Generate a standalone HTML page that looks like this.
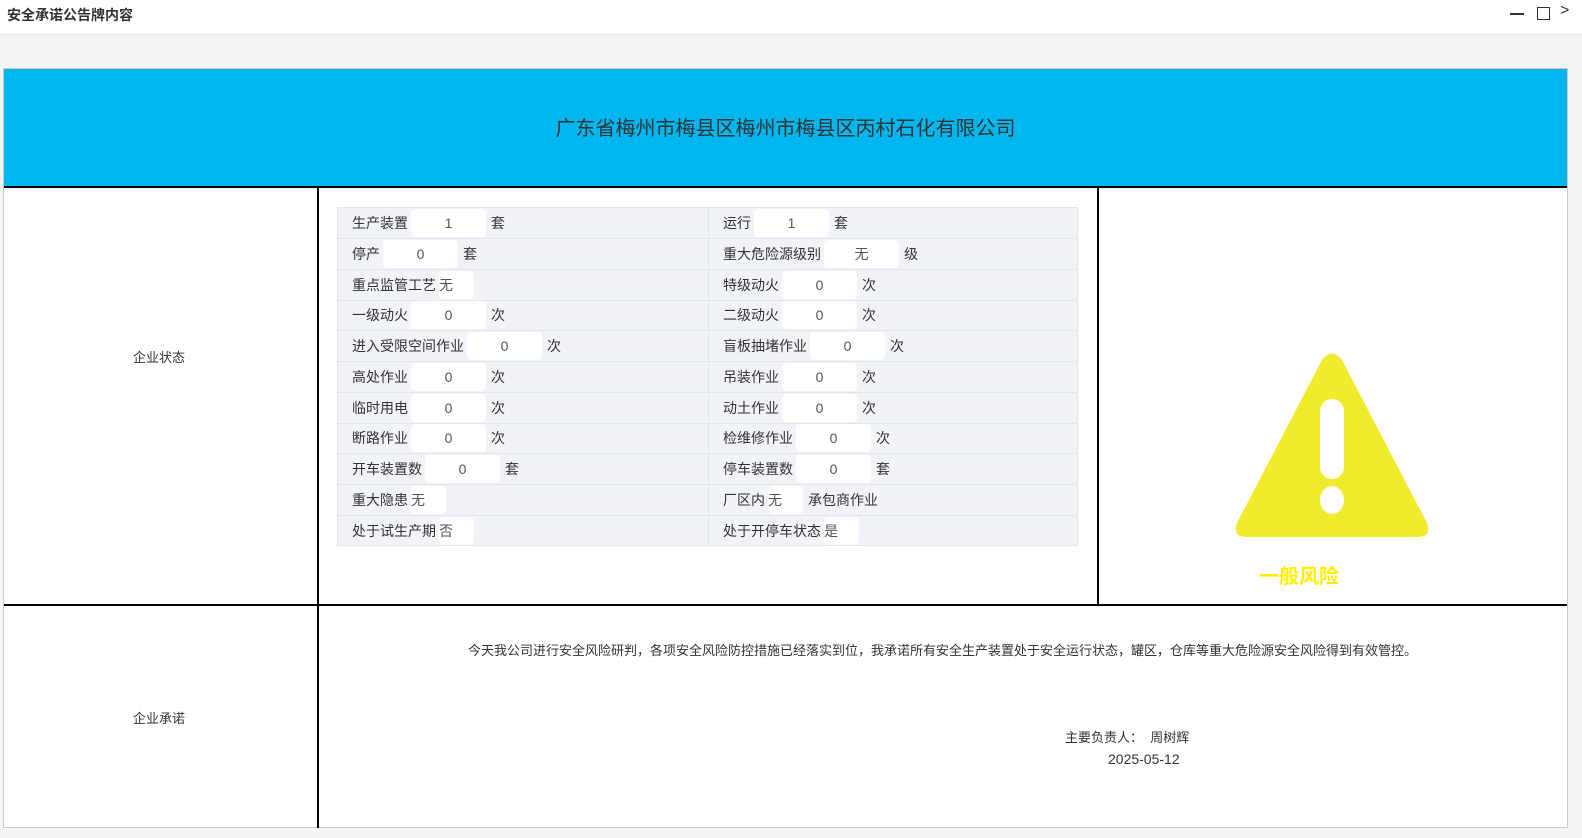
<!DOCTYPE html>
<html><head><meta charset="utf-8"><style>
*{margin:0;padding:0;box-sizing:border-box}
body{width:1582px;height:838px;background:#f4f5f7;font-family:"Liberation Sans","Noto Sans CJK SC",sans-serif;color:#333;position:relative;overflow:hidden}
.top{position:absolute;left:0;top:0;width:1582px;height:35px;background:#fff;border-bottom:1px solid #e8e8e8}
.top .t{position:absolute;left:7px;top:5px;font-size:14px;font-weight:bold;color:#333}
.card{position:absolute;left:3px;top:68px;width:1565px;height:760px;background:#fff;border:1px solid #c8c8c8}
.hd{position:absolute;left:0;top:0;width:1563px;height:117px;background:#00b6ee;text-align:center;line-height:120px;font-size:20px;color:#333}
.hl{position:absolute;background:#000}
.lab{position:absolute;font-size:13px;color:#333}
.tbl{position:absolute;left:333px;top:138px;width:741px;height:339px;background:#f1f3f8;border:1px solid #e3e6ee}
.row{position:absolute;left:0;width:739px;height:31px;border-bottom:1px solid #e3e6ee}
.c{position:absolute;top:0;height:30px;display:flex;align-items:center;font-size:14px;color:#333;white-space:nowrap}
.c1{left:14px}.c2{left:385px}
.sep{position:absolute;left:370px;top:0;width:1px;height:337px;background:#e3e6ee}
.in{display:inline-block;width:75px;height:28px;background:#fff;border-radius:4px;text-align:center;line-height:28px;margin:0 5px 0 3px;color:#555}
.sm{width:35px;text-align:left;margin-left:3px}
</style></head><body>
<div class="top"><div class="t">安全承诺公告牌内容</div>
<div style="position:absolute;left:1510px;top:13px;width:14px;height:2px;background:#333"></div>
<div style="position:absolute;left:1537px;top:7px;width:13px;height:13px;border:1px solid #333"></div>
<div style="position:absolute;left:1560px;top:2px;font-size:16px;color:#333">&gt;</div>
</div>
<div class="card">
<div class="hd">广东省梅州市梅县区梅州市梅县区丙村石化有限公司</div>
<div class="hl" style="left:0;top:117px;width:1563px;height:2px"></div>
<div class="hl" style="left:0;top:535px;width:1563px;height:2px"></div>
<div class="hl" style="left:313px;top:117px;width:2px;height:642px"></div>
<div class="hl" style="left:1093px;top:117px;width:2px;height:418px"></div>
<div class="lab" style="left:129px;top:278px">企业状态</div>
<div class="lab" style="left:129px;top:639px">企业承诺</div>
<div class="tbl">
<div class="sep"></div>
<div class="row" style="top:0"><div class="c c1">生产装置<span class="in">1</span>套</div><div class="c c2">运行<span class="in">1</span>套</div></div>
<div class="row" style="top:31px"><div class="c c1">停产<span class="in">0</span>套</div><div class="c c2">重大危险源级别<span class="in">无</span>级</div></div>
<div class="row" style="top:62px"><div class="c c1">重点监管工艺<span class="in sm">无</span></div><div class="c c2">特级动火<span class="in">0</span>次</div></div>
<div class="row" style="top:92px"><div class="c c1">一级动火<span class="in">0</span>次</div><div class="c c2">二级动火<span class="in">0</span>次</div></div>
<div class="row" style="top:123px"><div class="c c1">进入受限空间作业<span class="in">0</span>次</div><div class="c c2">盲板抽堵作业<span class="in">0</span>次</div></div>
<div class="row" style="top:154px"><div class="c c1">高处作业<span class="in">0</span>次</div><div class="c c2">吊装作业<span class="in">0</span>次</div></div>
<div class="row" style="top:185px"><div class="c c1">临时用电<span class="in">0</span>次</div><div class="c c2">动土作业<span class="in">0</span>次</div></div>
<div class="row" style="top:215px"><div class="c c1">断路作业<span class="in">0</span>次</div><div class="c c2">检维修作业<span class="in">0</span>次</div></div>
<div class="row" style="top:246px"><div class="c c1">开车装置数<span class="in">0</span>套</div><div class="c c2">停车装置数<span class="in">0</span>套</div></div>
<div class="row" style="top:277px"><div class="c c1">重大隐患 <span class="in sm">无</span></div><div class="c c2">厂区内 <span class="in sm">无</span>承包商作业</div></div>
<div class="row" style="top:308px;border:none"><div class="c c1">处于试生产期 <span class="in sm">否</span></div><div class="c c2">处于开停车状态 <span class="in sm">是</span></div></div>
</div>
<svg style="position:absolute;left:1228px;top:284px" width="200" height="186" viewBox="0 0 200 186">
<path d="M90 7 Q100 -6 110 7 L195 170 Q200 184 185 184 L15 184 Q0 184 5 170 Z" fill="#f2ea2c"/>
<rect x="88" y="46" width="24" height="80" rx="12" fill="#fff"/>
<ellipse cx="100" cx2="0" cy="147" rx="12" ry="14" fill="#fff"/>
</svg>
<div style="position:absolute;left:1255px;top:491px;font-size:20px;font-weight:bold;color:#ffee00">一般风险</div>
<div class="lab" style="left:464px;top:571px">今天我公司进行安全风险研判，各项安全风险防控措施已经落实到位，我承诺所有安全生产装置处于安全运行状态，罐区，仓库等重大危险源安全风险得到有效管控。</div>
<div class="lab" style="left:1061px;top:658px">主要负责人：&nbsp;&nbsp;周树辉</div>
<div class="lab" style="left:1104px;top:682px;font-size:14px">2025-05-12</div>
</div>
</body></html>
